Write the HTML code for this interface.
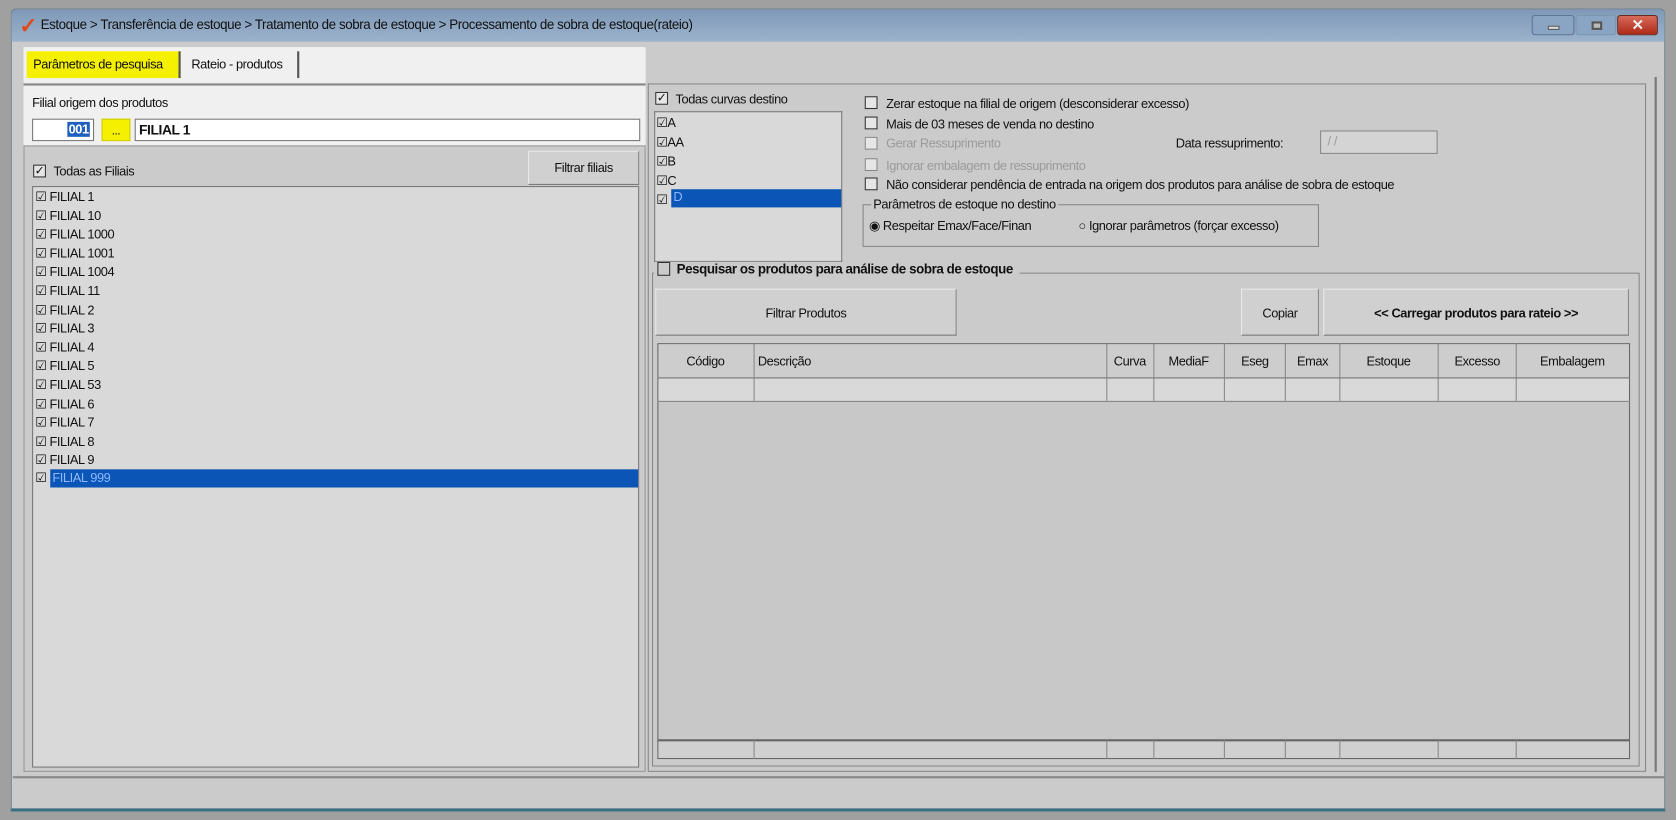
<!DOCTYPE html>
<html><head><meta charset="utf-8"><style>
*{box-sizing:border-box;margin:0;padding:0}
html,body{width:1676px;height:820px;overflow:hidden;background:#a0a0a0}
#w{position:absolute;left:0;top:0;width:1568px;height:767px;transform:scale(1.06888,1.06910);transform-origin:0 0;font-family:"Liberation Sans",sans-serif;font-size:12px;letter-spacing:-0.4px;color:#111;white-space:nowrap}
.a{position:absolute}
.chk{position:absolute;width:12px;height:12px;border:1px solid #333;background:#e6e6e6;font-size:11px;line-height:10px;text-align:center;letter-spacing:0}
.btn{position:absolute;background:#d0d0d0;border:1px solid #e8e8e8;border-right-color:#888;border-bottom-color:#777;text-align:center}
.gr{color:#9a9a9a}
</style></head><body><div id="w">
<div class="a" style="left:10px;top:8px;width:1548px;height:751px;background:#cbcbcb;border:1px solid #6a7f94;border-bottom:3px solid #3a6f80;border-radius:5px 5px 0 0"></div>
<div class="a" style="left:11px;top:9px;width:1546px;height:30px;background:linear-gradient(#7f99b8,#9cb3cc);border-radius:4px 4px 0 0"></div>
<div class="a" style="left:18px;top:12px;color:#e04a1a;font-size:20px;font-weight:bold">✓</div>
<div class="a" style="left:38px;top:16px;font-size:12.5px;color:#111">Estoque &gt; Transferência de estoque &gt; Tratamento de sobra de estoque &gt; Processamento de sobra de estoque(rateio)</div>
<div class="a" style="left:1433px;top:14px;width:40px;height:19px;background:#8aa5c4;border:1px solid #5d7594;border-radius:3px"><div class="a" style="left:14px;top:9px;width:11px;height:4px;background:#ddd;border:1px solid #555"></div></div>
<div class="a" style="left:1474px;top:14px;width:38px;height:19px;background:#8aa5c4;border:1px solid #7d95b0;border-radius:3px"><div class="a" style="left:14px;top:5px;width:10px;height:8px;border:2px solid #555;background:#bbb"></div></div>
<div class="a" style="left:1513px;top:14px;width:38px;height:19px;background:linear-gradient(#d66a5a,#b02a18);border:1px solid #6a2a20;border-radius:3px;color:#eee;text-align:center;font-weight:bold;font-size:14px;line-height:17px">✕</div>
<div class="a" style="left:22px;top:44px;width:582px;height:92px;background:#f0f0f0"></div>
<div class="a" style="left:25px;top:48px;width:144px;height:25px;background:#f5f000;border-right:2px solid #555;line-height:24px;padding-left:6px">Parâmetros de pesquisa</div>
<div class="a" style="left:171px;top:48px;width:109px;height:25px;border-right:2px solid #555;line-height:24px;padding-left:8px">Rateio - produtos</div>
<div class="a" style="left:22px;top:78px;width:582px;height:2px;background:#888"></div>
<div class="a" style="left:30px;top:89px">Filial origem dos produtos</div>
<div class="a" style="left:30px;top:111px;width:58px;height:21px;background:#fff;border:1px solid #777"><span class="a" style="right:3px;top:2px;background:#1f5fbf;color:#fff;font-weight:bold;padding:0 1px">001</span></div>
<div class="a" style="left:95px;top:111px;width:27px;height:21px;background:#f5f000;border:1px solid #cc0;text-align:center;font-size:11px;line-height:22px">...</div>
<div class="a" style="left:126px;top:111px;width:473px;height:21px;background:#fff;border:1px solid #777;font-weight:bold;font-size:13px;padding:2px 3px">FILIAL 1</div>
<div class="a" style="left:22px;top:136px;width:582px;height:586px;border:1px solid #999;background:#cbcbcb"></div>
<div class="chk" style="left:31px;top:154px">✓</div>
<div class="a" style="left:50px;top:153px">Todas as Filiais</div>
<div class="btn" style="left:494px;top:141px;width:104px;height:32px;line-height:30px">Filtrar filiais</div>
<div class="a" style="left:30px;top:174px;width:568px;height:544px;background:#d9d9d9;border:1px solid #777"></div>
<div class="a" style="left:33px;top:176px;line-height:17.6px">
<div>☑ FILIAL 1</div><div>☑ FILIAL 10</div><div>☑ FILIAL 1000</div><div>☑ FILIAL 1001</div><div>☑ FILIAL 1004</div><div>☑ FILIAL 11</div><div>☑ FILIAL 2</div><div>☑ FILIAL 3</div><div>☑ FILIAL 4</div><div>☑ FILIAL 5</div><div>☑ FILIAL 53</div><div>☑ FILIAL 6</div><div>☑ FILIAL 7</div><div>☑ FILIAL 8</div><div>☑ FILIAL 9</div></div>
<div class="a" style="left:47px;top:439px;width:550px;height:17px;background:#0a55b5;color:#8fb8ff;padding-left:2px;line-height:17px">FILIAL 999</div>
<div class="a" style="left:33px;top:439px;line-height:17px">☑</div>
<div class="a" style="left:606px;top:78px;width:934px;height:644px;border:1px solid #888"></div>
<div class="a" style="left:1548px;top:72px;width:2px;height:650px;background:#777"></div>
<div class="chk" style="left:613px;top:86px">✓</div>
<div class="a" style="left:632px;top:86px">Todas curvas destino</div>
<div class="a" style="left:612px;top:104px;width:176px;height:142px;background:#d9d9d9;border:1px solid #777;border-bottom:2px solid #888"></div>
<div class="a" style="left:614px;top:106px;line-height:18px"><div>☑A</div><div>☑AA</div><div>☑B</div><div>☑C</div><div>☑</div></div>
<div class="a" style="left:628px;top:177px;width:159px;height:17px;background:#0a55b5;color:#8fb8ff;padding-left:2px">D</div>
<div class="chk" style="left:809px;top:90px"></div><div class="a" style="left:829px;top:90px">Zerar estoque na filial de origem (desconsiderar excesso)</div>
<div class="chk" style="left:809px;top:109px"></div><div class="a" style="left:829px;top:109px">Mais de 03 meses de venda no destino</div>
<div class="chk gr" style="left:809px;top:128px;border-color:#888"></div><div class="a gr" style="left:829px;top:127px">Gerar Ressuprimento</div>
<div class="a" style="left:1100px;top:127px">Data ressuprimento:</div>
<div class="a gr" style="left:1235px;top:122px;width:110px;height:22px;border:1px solid #888;background:#d4d4d4;padding:2px 6px">/ /</div>
<div class="chk" style="left:809px;top:148px;border-color:#888"></div><div class="a gr" style="left:829px;top:148px">Ignorar embalagem de ressuprimento</div>
<div class="chk" style="left:809px;top:166px"></div><div class="a" style="left:829px;top:166px">Não considerar pendência de entrada na origem dos produtos para análise de sobra de estoque</div>
<div class="a" style="left:807px;top:191px;width:427px;height:40px;border:1px solid #888"></div>
<div class="a" style="left:815px;top:184px;background:#cbcbcb;padding:0 2px">Parâmetros de estoque no destino</div>
<div class="a" style="left:813px;top:204px">◉ Respeitar Emax/Face/Finan</div>
<div class="a" style="left:1009px;top:204px">○ Ignorar parâmetros (forçar excesso)</div>
<div class="a" style="left:610px;top:255px;width:924px;height:462px;border:1px solid #888"></div>
<div class="a" style="left:612px;top:245px;background:#cbcbcb;padding:0 6px 0 3px;font-weight:bold;font-size:12.5px"><span style="display:inline-block;width:12px;height:13px;border:1px solid #333;vertical-align:-2px;margin-right:6px"></span>Pesquisar os produtos para análise de sobra de estoque</div>
<div class="btn" style="left:613px;top:270px;width:282px;height:44px;line-height:44px">Filtrar Produtos</div>
<div class="btn" style="left:1161px;top:270px;width:73px;height:44px;line-height:44px">Copiar</div>
<div class="btn" style="left:1238px;top:270px;width:286px;height:44px;line-height:44px;font-weight:bold">&lt;&lt; Carregar produtos para rateio &gt;&gt;</div>
<div class="a" style="left:615px;top:321px;width:910px;height:389px;background:#c8c8c8;border:1px solid #666"></div>
<svg class="a" style="left:615px;top:321px" width="910" height="389">
<rect x="1" y="1" width="908" height="31" fill="#cdcdcd"/><rect x="1" y="33" width="908" height="21" fill="#d9d9d9"/><rect x="1" y="371" width="908" height="17" fill="#d0d0d0"/>
<line x1="0" y1="32.5" x2="910" y2="32.5" stroke="#777"/><line x1="0" y1="54.5" x2="910" y2="54.5" stroke="#888"/><line x1="0" y1="371.5" x2="910" y2="371.5" stroke="#666" stroke-width="2"/>
<g stroke="#888"><path d="M90.5 0V54M420.5 0V54M464.5 0V54M530.5 0V54M587.5 0V54M638.5 0V54M730.5 0V54M803.5 0V54M90.5 371V389M420.5 371V389M464.5 371V389M530.5 371V389M587.5 371V389M638.5 371V389M730.5 371V389M803.5 371V389"/></g>
<g font-family="Liberation Sans,sans-serif" font-size="12" letter-spacing="-0.4" fill="#111" text-anchor="middle">
<text x="45" y="21">Código</text><text x="94" y="21" text-anchor="start">Descrição</text><text x="442" y="21">Curva</text><text x="497" y="21">MediaF</text><text x="559" y="21">Eseg</text><text x="613" y="21">Emax</text><text x="684" y="21">Estoque</text><text x="767" y="21">Excesso</text><text x="856" y="21">Embalagem</text></g>
</svg>
<div class="a" style="left:12px;top:726px;width:1545px;height:2px;background:#888"></div>
</div></body></html>
